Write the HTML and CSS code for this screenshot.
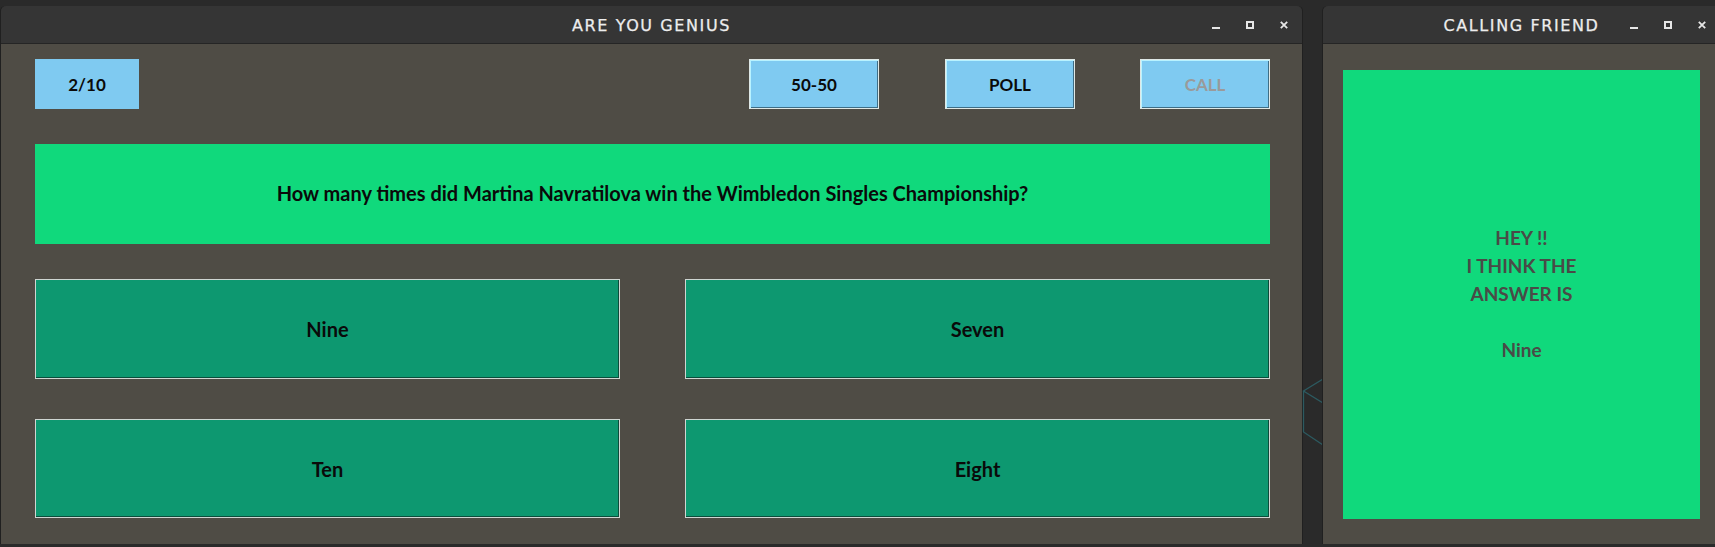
FILE: index.html
```html
<!DOCTYPE html>
<html>
<head>
<meta charset="utf-8">
<link rel="stylesheet" href="styles.css">
</head>
<body>
<div class="desktop">
  <div class="window win-main">
    <div class="titlebar">
      <div></div>
      <div class="title">ARE YOU GENIUS</div>
      <div class="controls">
        <svg class="ctl" width="8" height="8" viewBox="0 0 8 8"><rect x="0" y="6" width="8" height="2" fill="#e6e6e6"/></svg>
        <svg class="ctl" width="8" height="8" viewBox="0 0 8 8"><rect x="1" y="1" width="6" height="6" fill="none" stroke="#e6e6e6" stroke-width="2"/></svg>
        <svg class="ctl" width="8" height="8" viewBox="0 0 8 8"><path d="M0.8 0.8 L7.2 7.2 M7.2 0.8 L0.8 7.2" stroke="#e6e6e6" stroke-width="1.8"/></svg>
      </div>
    </div>
    <div class="content">
      <div class="toolbar">
        <div class="counter">2/10</div>
        <div class="spacer"></div>
        <div class="lifeline">50-50</div>
        <div class="lifeline poll">POLL</div>
        <div class="lifeline call disabled">CALL</div>
      </div>
      <div class="question">How many times did Martina Navratilova win the Wimbledon Singles Championship?</div>
      <div class="answers">
        <div class="answer">Nine</div>
        <div class="answer">Seven</div>
        <div class="answer">Ten</div>
        <div class="answer">Eight</div>
      </div>
    </div>
  </div>
  <div class="gap">
    <svg width="21" height="547" viewBox="0 0 21 547">
      <path d="M21 379 L1.5 391 L21 403 M1.5 391 L1.5 432 L21 445" fill="none" stroke="#2c5a60" stroke-width="1.3"/>
    </svg>
  </div>
  <div class="window win-friend">
    <div class="titlebar">
      <div></div>
      <div class="title">CALLING FRIEND</div>
      <div class="controls">
        <svg class="ctl" width="8" height="8" viewBox="0 0 8 8"><rect x="0" y="6" width="8" height="2" fill="#e6e6e6"/></svg>
        <svg class="ctl" width="8" height="8" viewBox="0 0 8 8"><rect x="1" y="1" width="6" height="6" fill="none" stroke="#e6e6e6" stroke-width="2"/></svg>
        <svg class="ctl" width="8" height="8" viewBox="0 0 8 8"><path d="M0.8 0.8 L7.2 7.2 M7.2 0.8 L0.8 7.2" stroke="#e6e6e6" stroke-width="1.8"/></svg>
      </div>
    </div>
    <div class="content friend-content">
      <div class="friend-panel">
        <div class="friend-text">HEY !!<br>I THINK THE<br>ANSWER IS<br><br>Nine</div>
      </div>
    </div>
  </div>
</div>
</body>
</html>
```

FILE: styles.css
```css
html, body {
  margin: 0;
  padding: 0;
}
body {
  width: 1715px;
  height: 547px;
  overflow: hidden;
  background: #2a2a2a;
  font-family: "Lato", "Liberation Sans", sans-serif;
}
.desktop {
  display: flex;
  align-items: flex-start;
  padding-top: 6px;
  padding-left: 1px;
  width: 1714px;
  overflow: hidden;
}
.window {
  display: flex;
  flex-direction: column;
  flex-shrink: 0;
  height: 538px;
  border-radius: 5px 5px 0 0;
  overflow: hidden;
  box-shadow: 1px 0 0 #202020, -1px 0 0 #202020;
}
.win-main { width: 1301px; }
.win-friend { width: 397px; }
.gap { width: 21px; height: 538px; margin-top: -6px; flex-shrink: 0; }
.gap svg { display: block; }

.titlebar {
  height: 37px;
  background: #353535;
  border-bottom: 1px solid #252525;
  display: grid;
  grid-template-columns: 1fr auto 1fr;
  align-items: center;
}
.title {
  font-family: "DejaVu Sans", sans-serif;
  font-size: 16px;
  letter-spacing: 1.6px;
  color: #ededed;
  padding-top: 1px;
  -webkit-text-stroke: 0.25px #ededed;
}
.controls {
  display: flex;
  justify-content: flex-end;
  gap: 26px;
  padding-right: 14px;
  padding-top: 1px;
}
.ctl { display: block; }

.content {
  flex: 1;
  background: #4f4c45;
  padding: 15px 32px 26px 34px;
  display: flex;
  flex-direction: column;
}
.toolbar {
  display: flex;
  height: 50px;
}
.spacer { flex: 1; }
.counter {
  width: 104px;
  background: #7fcaf1;
  display: flex;
  align-items: center;
  justify-content: center;
  font-weight: 700;
  font-size: 17px;
  color: #0a0a0a;
}
.lifeline {
  width: 128px;
  background: #7fcaf1;
  border: 1px solid #dfe8e6;
  box-shadow: inset 1px 1px 0 #b8f2ff, inset -1px -1px 0 #3e6e86;
  display: flex;
  align-items: center;
  justify-content: center;
  font-weight: 700;
  font-size: 17px;
  color: #0a0a0a;
}
.poll { margin-left: 66px; }
.call { margin-left: 65px; }
.disabled { color: #9a9a9a; }

.question {
  margin-top: 35px;
  height: 100px;
  background: #10d97c;
  display: flex;
  align-items: center;
  justify-content: center;
  font-weight: 700;
  font-size: 20px;
  color: #0a0a0a;
  padding-bottom: 2px;
  box-sizing: border-box;
}
.answers {
  margin-top: 35px;
  display: grid;
  grid-template-columns: 585px 585px;
  grid-template-rows: 100px 99px;
  column-gap: 65px;
  row-gap: 40px;
}
.answer {
  background: #0d9870;
  border: 1px solid #cfd6d2;
  box-shadow: inset -1px -1px 0 #0a4d3b;
  display: flex;
  align-items: center;
  justify-content: center;
  font-weight: 700;
  font-size: 20px;
  color: #0a0a0a;
}

.friend-content {
  padding: 26px 20px 25px 20px;
}
.friend-panel {
  flex: 1;
  background: #10d97c;
  display: flex;
  align-items: center;
  justify-content: center;
}
.friend-text {
  text-align: center;
  font-weight: 700;
  font-size: 19px;
  line-height: 28px;
  color: #4a4a47;
  padding-bottom: 2px;
}
```
